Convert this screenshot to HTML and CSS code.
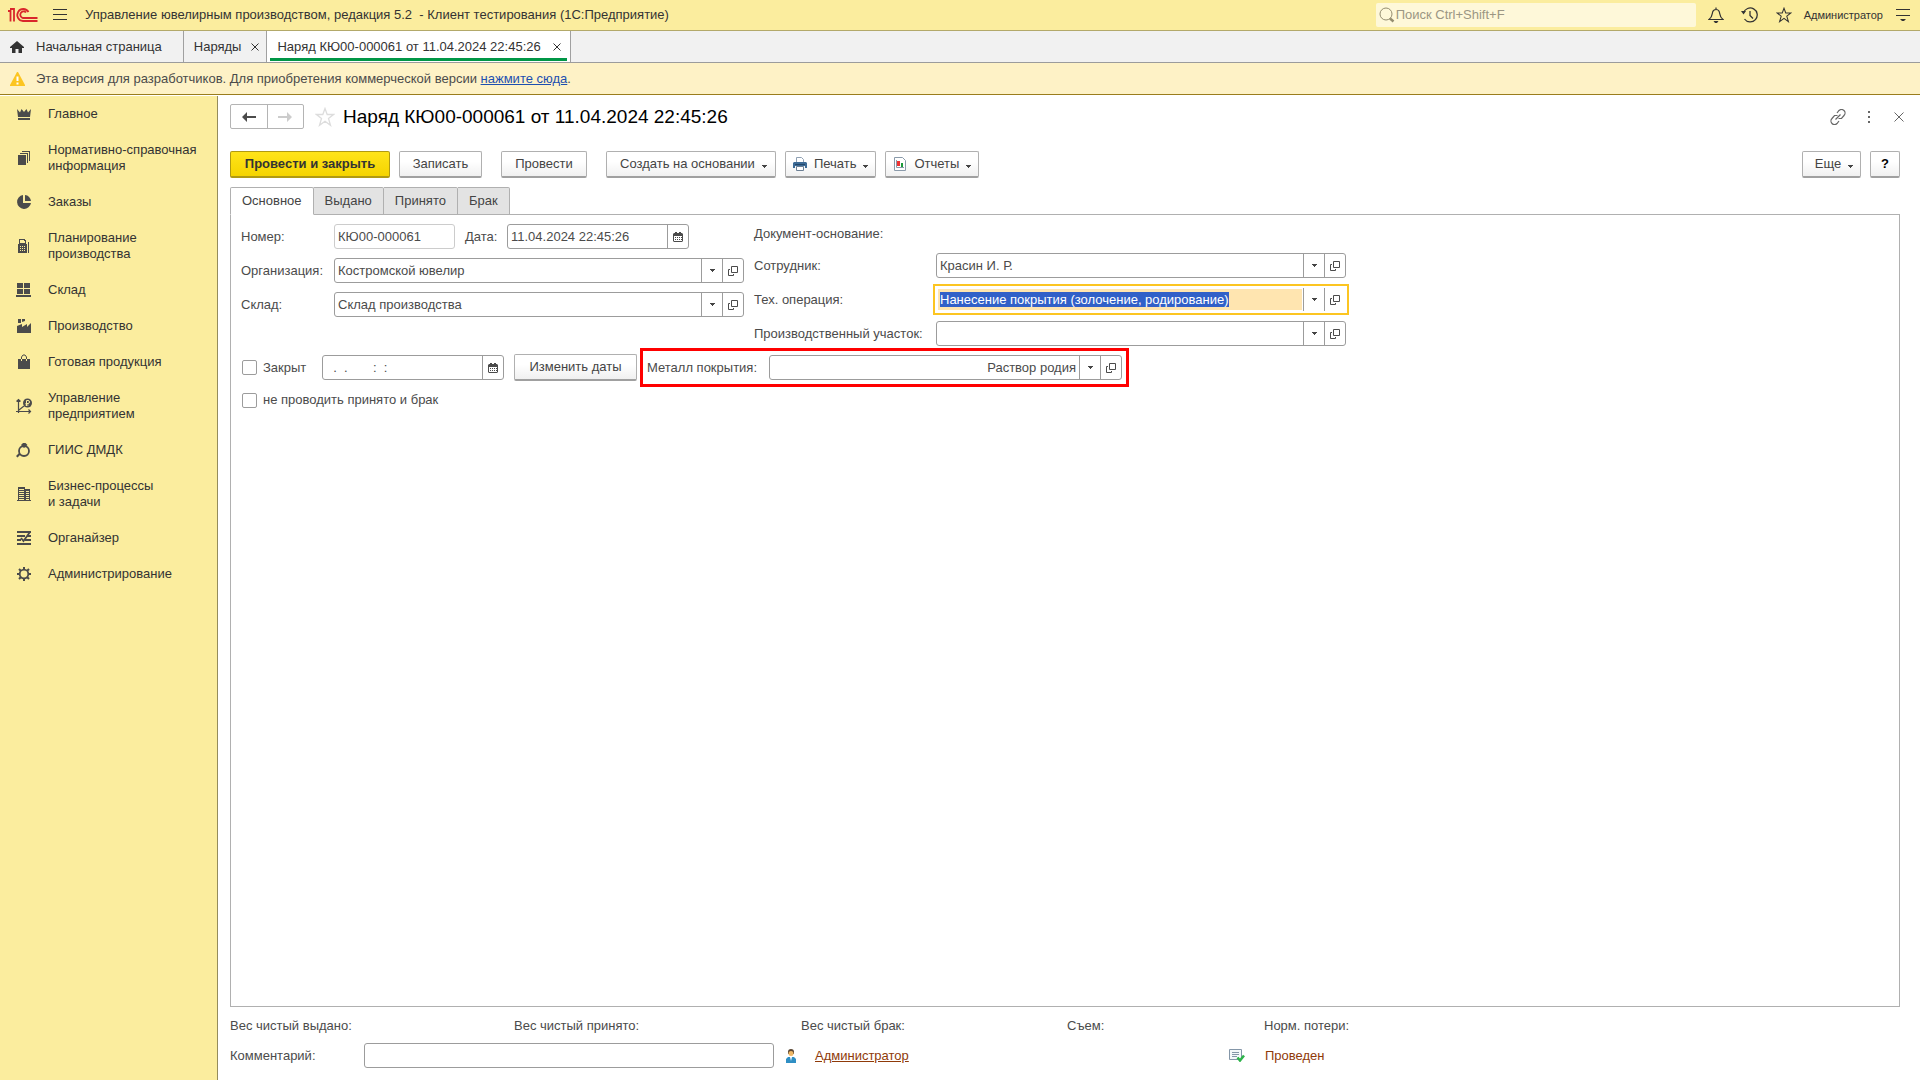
FILE: index.html
```html
<!DOCTYPE html>
<html lang="ru">
<head>
<meta charset="utf-8">
<title>Наряд КЮ00-000061 от 11.04.2024 22:45:26</title>
<link rel="stylesheet" href="styles.css">
</head>
<body>
<svg class="defs" aria-hidden="true">
  <symbol id="i-caret" viewBox="0 0 5 3"><path d="M0 0h5v1H4v1H3v1H2V2H1V1H0z" fill="currentColor"/></symbol>
  <symbol id="i-open" viewBox="0 0 10 10"><path d="M3.500.5h6v6h-6zM2 3.500H.5v6h5V8" fill="none" stroke="currentColor"/></symbol>
  <symbol id="i-cal" viewBox="0 0 10 10"><path d="M1 1h1V0h2v1h2V0h2v1h1l1 1v7l-1 1H1L0 9V2z" fill="currentColor"/><path d="M1 4h8v5H1z" fill="#fff"/><path d="M2 5h1v1H2zm2 0h1v1H4zm2 0h1v1H6zM2 7h1v1H2zm2 0h1v1H4zm2 0h1v1H6zm2-2h1v1H8zm0 2h1v1H8z" fill="currentColor"/></symbol>
  <symbol id="i-star" viewBox="0 0 20 20"><path d="M10 1.500l2.200 6H18.500l-5 4 2 6.800-5.500-4-5.500 4 2-6.800-5-4h6.300z" fill="none" stroke="currentColor" stroke-width="1.300"/></symbol>
</svg>

<header class="topbar">
  <svg class="logo" viewBox="0 0 30 16" fill="none" stroke="#d9262b" stroke-width="1.800"><path d="M0 4h2.500v10.500M2 2h4v12.500"/><path d="M20.500 5A6 6 0 1 0 15 14H29.500M18 5.500A3.300 3.300 0 1 0 15 11H29.500"/></svg>
  <button class="icon-btn burger" aria-label="Меню"><svg width="14" height="12" viewBox="0 0 14 12"><path d="M0 .5h14M0 5.500h14M0 10.500h14" stroke="currentColor"/></svg></button>
  <span class="app-title">Управление ювелирным производством, редакция 5.2&nbsp; - Клиент тестирования (1С:Предприятие)</span>
  <label class="search">
    <svg width="16" height="16" viewBox="0 0 16 16" fill="none" stroke="currentColor"><circle cx="7" cy="7" r="6"/><path d="M11 11.500l3.500 3" stroke-width="2.500"/></svg>
    <input type="text" placeholder="Поиск Ctrl+Shift+F" aria-label="Поиск">
  </label>
  <button class="icon-btn" aria-label="Уведомления"><svg width="16" height="16" viewBox="0 0 16 16" fill="none" stroke="currentColor" stroke-width="1.200"><path d="M1 12.500c3-2 3-4 3.500-7 .3-2 1.500-3 3.500-3s3.200 1 3.500 3c.5 3 .5 5 3.500 7zM8 2.500V.5"/><path d="M5.500 14h5l-1.500 2H7z" fill="currentColor" stroke="none"/></svg></button>
  <button class="icon-btn" aria-label="История"><svg width="17" height="16" viewBox="0 0 17 16" fill="none" stroke="currentColor" stroke-width="1.300"><path d="M2.500 6A7 7 0 1 1 3.500 12M9 4v4.500l3 3"/><path d="M0 4h5L2.500 7.500z" fill="currentColor" stroke="none"/></svg></button>
  <button class="icon-btn" aria-label="Избранное"><svg width="16" height="16"><use href="#i-star"/></svg></button>
  <a class="user" href="#">Администратор</a>
  <button class="icon-btn" aria-label="Настройки"><svg width="14" height="14" viewBox="0 0 14 14"><path d="M0 1.500h14M0 7.500h14" stroke="currentColor"/><path d="M4 11h6l-2 2H6z" fill="currentColor"/></svg></button>
</header>

<nav class="tabs">
  <a class="tab home" href="#"><svg width="14" height="12" viewBox="0 0 14 12"><path d="M7 0l7 6v1h-2v5H8.500V8h-3v4H2V7H0V6z" fill="currentColor"/></svg>Начальная страница</a>
  <a class="tab" href="#">Наряды<svg class="x" viewBox="0 0 8 8"><path d="M.5.5l7 7m0-7l-7 7" stroke="currentColor"/></svg></a>
  <a class="tab active" href="#">Наряд КЮ00-000061 от 11.04.2024 22:45:26<svg class="x" viewBox="0 0 8 8"><path d="M.5.5l7 7m0-7l-7 7" stroke="currentColor"/></svg></a>
</nav>

<div class="notice">
  <svg width="15" height="14" viewBox="0 0 15 14"><path d="M7 0h1l7 13v1H0v-1z" fill="#fcc521"/><path d="M6.500 4.500h2V9h-2zm0 6h2v2h-2z" fill="#fff"/></svg>
  <p>Эта версия для разработчиков. Для приобретения коммерческой версии <a href="#">нажмите сюда</a>.</p>
</div>

<div class="body">
  <nav class="sidebar">
    <a href="#"><svg viewBox="0 0 16 16"><path d="M1 3l3 3.500L5.500 3 8 6l2.500-3L12 6.500 15 3l-1 8H2zM2 12h12v2H2z"/></svg>Главное</a>
    <a href="#"><svg viewBox="0 0 16 16"><path d="M2 5h8v10H2zM4 3h8v10h-1V4H4zM6 1h8v10h-1V2H6z"/></svg>Нормативно-справочная<br>информация</a>
    <a href="#"><svg viewBox="0 0 16 16"><path d="M7 1v8h8A7 7 0 1 1 7 1z"/><path d="M9 1a6.500 6.500 0 0 1 6 6H9z"/></svg>Заказы</a>
    <a href="#"><svg viewBox="0 0 16 16"><path d="M3 1h6v1h1v4h1v9H2V6h1zm1 1v3h5V3H8V2zM12 4h1v11h-1z" fill-rule="evenodd"/><path d="M4 8.500h6M4 10.500h6M4 12.500h6" stroke="#fbed9e" stroke-dasharray="1 1"/></svg>Планирование<br>производства</a>
    <a href="#"><svg viewBox="0 0 16 16"><path d="M1 1h6v5H1zM8 1h6v5H8zM1 7h6v5H1zM8 7h6v5H8zM0 13h15v2H0z"/></svg>Склад</a>
    <a href="#"><svg viewBox="0 0 16 16"><path d="M2 1h3v4H2zM6 1h3v2L6 4zM1 8l5-2v3l5-3v3l4-4v10H1z"/></svg>Производство</a>
    <a href="#"><svg viewBox="0 0 16 16"><path d="M2 5h12v10H2z"/><path d="M5.500 5V3l1.500-2h2l1.500 2v2" fill="none" stroke="#4b4b4b"/><path d="M5.500 5v2M10.500 5v2" stroke="#fbed9e"/></svg>Готовая продукция</a>
    <a href="#"><svg viewBox="0 0 16 16"><path d="M2.500 1v14M0 13.500h15M.5 3.500l2-2 2 2M12.500 11.500l2 2-2 2M3 12l5-4" fill="none" stroke="#4b4b4b" stroke-width="1.200"/><circle cx="11.500" cy="5" r="4.500"/><path d="M10.500 8V2.500h1.500a1.300 1.300 0 0 1 0 3H9.500M9.500 7h3" fill="none" stroke="#fbed9e"/></svg>Управление<br>предприятием</a>
    <a href="#"><svg viewBox="0 0 16 16"><circle cx="8" cy="9" r="5" fill="none" stroke="#4b4b4b" stroke-width="1.800"/><path d="M5 3l2-2h2.500l2 2L8 6zM0 14l3-3 1.500 1.500L1.500 15.500z"/></svg>ГИИС ДМДК</a>
    <a href="#"><svg viewBox="0 0 16 16"><path d="M2 1h7v2h5v11h1v1H1v-1h1z"/><path d="M3 3.500h5M3 5.500h5M3 7.500h5M3 9.500h5M3 11.500h5M3 13.500h5M10 5.500h3M10 7.500h3M10 9.500h3M10 11.500h3M10 13.500h3" stroke="#fbed9e"/></svg>Бизнес-процессы<br>и задачи</a>
    <a href="#"><svg viewBox="0 0 16 16"><path d="M1 1h14v2H1zM1 5h8v2H1zM11 5h4v2h-4zM1 9h4v2H1zM9 9h6v2H9zM1 13h14v2H1z"/><path d="M14 2L7.500 11 5 8" fill="none" stroke="#4b4b4b" stroke-width="1.800"/></svg>Органайзер</a>
    <a href="#"><svg viewBox="0 0 16 16"><circle cx="8" cy="8" r="4.300" fill="none" stroke="#4b4b4b" stroke-width="1.800"/><path d="M8 1v3M8 12v3M1 8h3M12 8h3M3 3l2 2M11 11l2 2M13 3l-2 2M5 11l-2 2" stroke="#4b4b4b" stroke-width="2"/></svg>Администрирование</a>
  </nav>

  <main class="main">
    <div class="title-row">
      <div class="nav-btns">
        <button aria-label="Назад"><svg width="14" height="10" viewBox="0 0 14 10"><path d="M5 0v4h9v2H5v4L0 5z" fill="#4b4b4b"/></svg></button>
        <button aria-label="Вперед" disabled><svg width="14" height="10" viewBox="0 0 14 10"><path d="M9 0v4H0v2h9v4l5-5z" fill="#ccc"/></svg></button>
      </div>
      <button class="icon-btn fav" aria-label="В избранное"><svg width="20" height="20"><use href="#i-star"/></svg></button>
      <h1>Наряд КЮ00-000061 от 11.04.2024 22:45:26</h1>
      <button class="icon-btn" aria-label="Ссылка"><svg width="16" height="16" viewBox="0 0 16 16" fill="none" stroke="currentColor" stroke-width="1.200"><path d="M7 4l2-2.500a3.400 3.400 0 0 1 5 5L11.500 9.500H8.500M9 12l-2 2.500a3.400 3.400 0 0 1-5-5L4.500 6.500h3M5.500 10.500l5-5"/></svg></button>
      <button class="icon-btn" aria-label="Еще"><svg width="16" height="12" viewBox="0 0 16 12"><path d="M7 0h2v2H7zM7 5h2v2H7zM7 10h2v2H7z" fill="currentColor"/></svg></button>
      <button class="icon-btn close" aria-label="Закрыть"><svg width="10" height="10" viewBox="0 0 10 10"><path d="M.5.5l9 9m0-9l-9 9" stroke="currentColor"/></svg></button>
    </div>

    <div class="toolbar">
      <button class="btn primary">Провести и закрыть</button>
      <button class="btn save">Записать</button>
      <button class="btn post">Провести</button>
      <button class="btn menu">Создать на основании<svg class="caret"><use href="#i-caret"/></svg></button>
      <button class="btn menu with-icon"><svg width="14" height="14" viewBox="0 0 14 14"><path d="M3.500 6V.5h5l2 2V6" fill="#fff" stroke="#8fa0b3"/><path d="M1 5h12l1 1v5h-2V9H2v2H0V6z" fill="#3d6b96"/><path d="M2 7h10v1H2z" fill="#24476a"/><path d="M3.500 9.500h7v4h-7z" fill="#fff" stroke="#6b7f94"/></svg>Печать<svg class="caret"><use href="#i-caret"/></svg></button>
      <button class="btn menu with-icon"><svg width="14" height="14" viewBox="0 0 14 14"><path d="M1.500.5h8l3 3v10h-11z" fill="#fff" stroke="#8a9aaa"/><path d="M3.500 3v7.500H11" fill="none" stroke="#8a9aaa"/><path d="M4 4h3v5H4z" fill="#e33"/><path d="M8 6h2v4H8z" fill="#1a9a3a"/></svg>Отчеты<svg class="caret"><use href="#i-caret"/></svg></button>
      <span class="spacer"></span>
      <button class="btn menu more">Еще<svg class="caret"><use href="#i-caret"/></svg></button>
      <button class="btn help" aria-label="Справка">?</button>
    </div>

    <div class="page-tabs" role="tablist">
      <button role="tab" aria-selected="true">Основное</button>
      <button role="tab" aria-selected="false">Выдано</button>
      <button role="tab" aria-selected="false">Принято</button>
      <button role="tab" aria-selected="false">Брак</button>
    </div>

    <section class="panel">
      <div class="cols">
        <div class="col left">
          <div class="row">
            <label for="num">Номер:</label>
            <div class="field num"><input id="num" type="text" value="КЮ00-000061" readonly></div>
            <label class="date-label" for="date">Дата:</label>
            <div class="field date"><input id="date" type="text" value="11.04.2024 22:45:26"><button aria-label="Календарь"><svg class="cal"><use href="#i-cal"/></svg></button></div>
          </div>
          <div class="row">
            <label for="org">Организация:</label>
            <div class="field ref"><input id="org" type="text" value="Костромской ювелир"><button aria-label="Выбрать"><svg class="caret"><use href="#i-caret"/></svg></button><button aria-label="Открыть"><svg class="open"><use href="#i-open"/></svg></button></div>
          </div>
          <div class="row">
            <label for="store">Склад:</label>
            <div class="field ref"><input id="store" type="text" value="Склад производства"><button aria-label="Выбрать"><svg class="caret"><use href="#i-caret"/></svg></button><button aria-label="Открыть"><svg class="open"><use href="#i-open"/></svg></button></div>
          </div>
        </div>
        <div class="col right">
          <div class="row basis"><span>Документ-основание:</span></div>
          <div class="row">
            <label for="emp">Сотрудник:</label>
            <div class="field ref"><input id="emp" type="text" value="Красин И. Р."><button aria-label="Выбрать"><svg class="caret"><use href="#i-caret"/></svg></button><button aria-label="Открыть"><svg class="open"><use href="#i-open"/></svg></button></div>
          </div>
          <div class="row">
            <label for="op">Тех. операция:</label>
            <div class="field ref focused"><input id="op" type="text" value="Нанесение покрытия (золочение, родирование)"><button aria-label="Выбрать"><svg class="caret"><use href="#i-caret"/></svg></button><button aria-label="Открыть"><svg class="open"><use href="#i-open"/></svg></button></div>
          </div>
          <div class="row">
            <label for="area">Производственный участок:</label>
            <div class="field ref"><input id="area" type="text"><button aria-label="Выбрать"><svg class="caret"><use href="#i-caret"/></svg></button><button aria-label="Открыть"><svg class="open"><use href="#i-open"/></svg></button></div>
          </div>
        </div>
      </div>

      <div class="close-row">
        <label class="check closed"><input type="checkbox">Закрыт</label>
        <div class="field date"><input type="text" aria-label="Дата закрытия" value="&nbsp;&nbsp;.&nbsp;&nbsp;.&nbsp;&nbsp;&nbsp;&nbsp;&nbsp;&nbsp;&nbsp;:&nbsp;&nbsp;:"><button aria-label="Календарь"><svg class="cal"><use href="#i-cal"/></svg></button></div>
        <button class="btn dates">Изменить даты</button>
        <div class="marked">
          <label for="metal">Металл покрытия:</label>
          <div class="field metal"><input id="metal" type="text" value="Раствор родия"><button aria-label="Выбрать"><svg class="caret"><use href="#i-caret"/></svg></button><button aria-label="Открыть"><svg class="open"><use href="#i-open"/></svg></button></div>
        </div>
      </div>
      <label class="check"><input type="checkbox">не проводить принято и брак</label>
    </section>

    <footer class="totals">
      <span>Вес чистый выдано:</span>
      <span>Вес чистый принято:</span>
      <span>Вес чистый брак:</span>
      <span>Съем:</span>
      <span>Норм. потери:</span>
    </footer>
    <footer class="status">
      <label for="comment">Комментарий:</label>
      <div class="field comment"><input id="comment" type="text"></div>
      <svg class="person" width="10" height="14" viewBox="0 0 10 14"><path d="M2 3a3 3 0 0 1 6 0v2H2z" fill="#5b4632"/><circle cx="5" cy="4.500" r="2.500" fill="#efb867"/><path d="M0 14v-4l2-2h6l2 2v4z" fill="#2f8fc4"/><path d="M4 8h2l-1 4z" fill="#fff"/></svg>
      <a class="author" href="#">Администратор</a>
      <svg class="doc" width="16" height="13" viewBox="0 0 16 13"><path d="M.5.5h12v10H.5z" fill="#f4f7fa" stroke="#8496a8"/><path d="M3 3.500h7M3 5.500h7M3 7.500h5" stroke="#8496a8"/><path d="M8.500 8.500l2.500 3L15 6.500" fill="none" stroke="#2db34a" stroke-width="2.500"/></svg>
      <span class="state">Проведен</span>
    </footer>
  </main>
</div>
<script src="main.js"></script>
</body>
</html>
```
FILE: styles.css
```css
* { box-sizing: border-box; }

body {
  margin: 0;
  min-height: 100vh;
  display: flex;
  flex-direction: column;
  background: #fff;
  color: #4b4b4b;
  font: 13px/16px "Liberation Sans", Arial, sans-serif;
}

button, input { font: inherit; color: inherit; }
button { padding: 0; border: 0; background: none; }
svg { display: block; flex: none; }
p, h1 { margin: 0; }
.defs { display: none; }
.icon-btn { display: flex; align-items: center; justify-content: center; }

/* Window header */
.topbar {
  display: flex;
  align-items: center;
  height: 31px;
  padding: 0 10px 0 8px;
  background: #fbed9e;
  border-bottom: 1px solid #b3a96a;
  color: #333;
}
.logo { width: 30px; height: 16px; }
.burger { margin: 0 18px 0 15px; }
.app-title { flex: 1; white-space: nowrap; }
.search {
  display: flex;
  align-items: center;
  gap: 1px;
  width: 320px;
  height: 24px;
  margin-right: 8px;
  padding-left: 3px;
  border-radius: 2px;
  background: #fef8d9;
  color: #948d70;
}
.search input { flex: 1; min-width: 0; padding: 0; border: 0; outline: 0; background: none; }
.search input::placeholder { color: #9b9683; }
.topbar > .search ~ .icon-btn { width: 24px; margin-right: 10px; }
.topbar > .user ~ .icon-btn { margin: 0 -5px 0 8px; }
.user { margin-left: -2px; color: #333; font-size: 11px; text-decoration: none; }

/* Open windows */
.tabs {
  display: flex;
  height: 32px;
  background: #f1f1f1;
  border-bottom: 1px solid #9c9c9c;
}
.tab {
  display: flex;
  align-items: center;
  gap: 10px;
  padding: 0 7px 0 10px;
  border-right: 1px solid #a0a0a0;
  color: #333;
  text-decoration: none;
  white-space: nowrap;
}
.home { gap: 12px; padding-right: 21px; }
.active {
  gap: 12px;
  padding-right: 9px;
  background: linear-gradient(#009646, #009646) center 27px / calc(100% - 6px) 3px no-repeat #fff;
}
.x { width: 8px; height: 8px; }

.notice {
  display: flex;
  align-items: center;
  gap: 11px;
  height: 32px;
  padding-left: 10px;
  background: #fef2c6;
  border-bottom: 1px solid #9a7d1c;
}
.notice a { color: #1d4fb0; }

.body { flex: 1; display: flex; padding-top: 1px; }

/* Sections */
.sidebar {
  width: 218px;
  flex: none;
  background: #fbed9e;
  border-right: 1px solid #948c5c;
}
.sidebar a {
  display: grid;
  grid-template-columns: 16px 1fr;
  column-gap: 16px;
  align-items: center;
  padding: 10px 0 10px 16px;
  color: #333;
  text-decoration: none;
}
.sidebar svg { width: 16px; height: 16px; grid-row: 1 / span 2; fill: #4b4b4b; }

.main {
  flex: 1;
  min-width: 0;
  display: flex;
  flex-direction: column;
  padding: 8px 20px 12px 12px;
}

.title-row { display: flex; align-items: center; height: 25px; color: #666; }
.nav-btns {
  display: flex;
  width: 74px;
  height: 25px;
  border: 1px solid #b4b4b4;
  border-radius: 2px;
}
.nav-btns button { flex: 1; display: flex; align-items: center; justify-content: center; }
.nav-btns button + button { border-left: 1px solid #b4b4b4; }
.fav { width: 20px; margin: 0 8px 0 11px; color: #ddd; }
h1 { flex: 1; color: #000; font-size: 19px; font-weight: 400; line-height: 24px; }
h1 ~ .icon-btn { width: 20px; margin-left: 11px; }
h1 ~ .close { width: 10px; margin: 0 -4px 0 15px; }

.toolbar { display: flex; gap: 9px; margin-top: 22px; }
.btn {
  display: flex;
  align-items: center;
  justify-content: center;
  height: 27px;
  padding: 0 13px;
  border: 1px solid #b0b0b0;
  border-bottom: 2px solid #a0a0a0;
  border-radius: 2px;
  background: linear-gradient(#fff 40%, #f0f0f0);
  color: #444;
  white-space: nowrap;
}
.primary {
  width: 160px;
  border-color: #b09a12;
  background: linear-gradient(#ffe41a, #f5d400);
  color: #333;
  font-weight: 700;
}
.save { width: 83px; }
.post { width: 86px; margin: 0 10px; }
.caret { width: 5px; height: 3px; color: #444; }
.btn .caret { margin: 4px 0 0 7px; }
.menu { padding-right: 8px; }
.with-icon { gap: 7px; padding: 0 7px; }
.btn.with-icon .caret { margin-left: 0; }
.more { width: 59px; }
.help { width: 30px; color: #000; font-weight: 700; }
.spacer { flex: 1; }

.page-tabs { display: flex; margin: 9px 0 -1px; }
.page-tabs button {
  position: relative;
  height: 28px;
  padding: 0 11px;
  border: 1px solid #b0b0b0;
  border-left-width: 0;
  border-radius: 0 2px 0 0;
  background: #e3e3e3;
  color: #444;
}
.page-tabs button[aria-selected="true"] {
  border-left-width: 1px;
  border-bottom-color: #fff;
  border-radius: 2px 2px 0 0;
  background: #fff;
}

.panel { flex: 1; padding: 9px 10px; border: 1px solid #b0b0b0; }
.cols { display: flex; gap: 10px; }
.col { display: flex; flex-direction: column; gap: 9px; }
.row { display: flex; align-items: center; }
.left .row > label:first-child { width: 93px; }
.left .row > .date-label { width: 52px; padding-left: 10px; }
.right .row > label { width: 182px; }
.basis { height: 20px; }

.field {
  display: flex;
  height: 25px;
  border: 1px solid #9c9c9c;
  border-radius: 3px;
  background: #fff;
}
.field input {
  flex: 1;
  min-width: 0;
  padding: 0 3px;
  border: 0;
  outline: 0;
  background: none;
  line-height: 15px;
}
.field button {
  display: flex;
  align-items: center;
  justify-content: center;
  width: 21px;
  border-left: 1px solid #9c9c9c;
}
.open, .cal { width: 10px; height: 10px; }
.num { width: 121px; border-color: #ccc; }
.date { width: 182px; }
.ref { width: 410px; }
.metal { width: 353px; }
.metal input { text-align: right; }
.focused {
  border-color: #fff;
  border-radius: 0;
  outline: 2px solid #fcc521;
  outline-offset: 1px;
}
.focused input {
  margin: 1px;
  padding: 0 2px;
  background: #ffe5b0;
}
.focused ::selection { background: #3160c8; color: #fff; }

.close-row { display: flex; align-items: center; margin: 2px 0 5px; }
.check { display: flex; align-items: center; gap: 6px; }
.check input {
  appearance: none;
  width: 15px;
  height: 15px;
  margin: 0 0 0 1px;
  border: 1px solid #9c9c9c;
  border-radius: 2px;
  background: #fff;
}
.closed { width: 81px; }
.dates { width: 123px; margin: 0 3px 0 10px; }
.marked {
  display: flex;
  align-items: center;
  padding: 4px;
  border: 3px solid #f00;
}
.marked label { width: 122px; }

.totals { display: grid; grid-template-columns: 284px 287px 266px 197px 1fr; margin-top: 11px; }
.status { display: flex; align-items: center; margin-top: 9px; }
.status label { width: 134px; }
.comment { width: 410px; }
.person { margin: 0 19px 0 12px; }
.author, .state { color: #8f3a09; }
.author { width: 414px; }
.doc { margin-right: 20px; }
```
FILE: main.js
```js
const operation = document.getElementById('op');
operation.focus();
operation.select();
```
